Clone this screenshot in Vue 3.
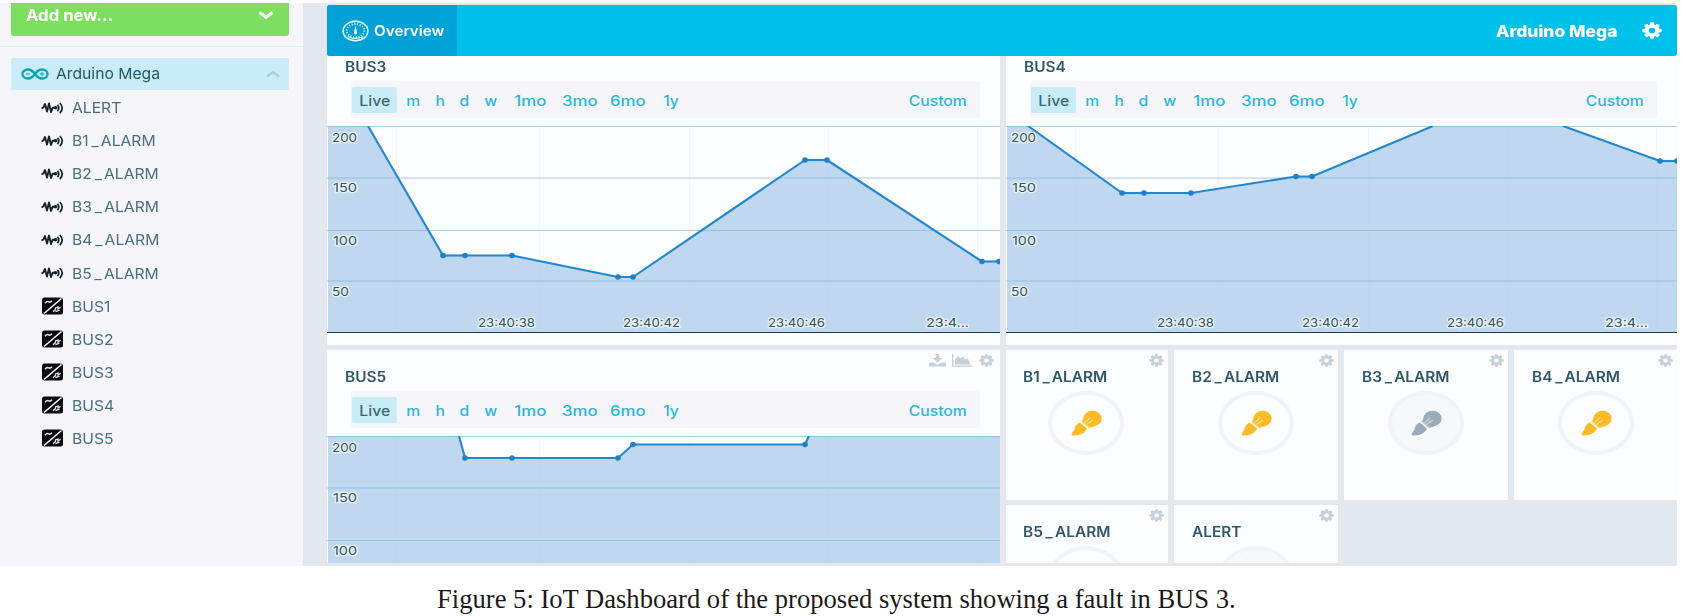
<script setup>
const ranges = ['Live', 'm', 'h', 'd', 'w', '1mo', '3mo', '6mo', '1y']

const devices = [
  { name: 'ALERT', kind: 'signal' },
  { name: 'B1_ALARM', kind: 'signal' },
  { name: 'B2_ALARM', kind: 'signal' },
  { name: 'B3_ALARM', kind: 'signal' },
  { name: 'B4_ALARM', kind: 'signal' },
  { name: 'B5_ALARM', kind: 'signal' },
  { name: 'BUS1', kind: 'analog' },
  { name: 'BUS2', kind: 'analog' },
  { name: 'BUS3', kind: 'analog' },
  { name: 'BUS4', kind: 'analog' },
  { name: 'BUS5', kind: 'analog' },
]

const grid = [0.5, 52, 104.5, 155]
const verticals = [69, 212, 362, 501, 650]
const values = [
  { text: '200', x: 5, y: 15.5, w: 25 },
  { text: '150', x: 6, y: 66, w: 24 },
  { text: '100', x: 6, y: 118.5, w: 24 },
  { text: '50', x: 5, y: 170, w: 17 },
]
const times = [
  { text: '23:40:38', x: 151, w: 57 },
  { text: '23:40:42', x: 296, w: 57 },
  { text: '23:40:46', x: 441, w: 57 },
  { text: '23:4...', x: 599, w: 43 },
]

const charts = [
  {
    name: 'BUS3', height: 206, tucked: true,
    points: [[41, 0], [116, 129.5], [138, 129.5], [185, 129.5], [291, 151], [306, 151], [478, 34], [500, 34], [655, 135.5], [672, 135.5]],
  },
  {
    name: 'BUS4', height: 206, tucked: true,
    points: [[22, 0], [116, 67], [138, 67], [185, 67], [290, 50.5], [306, 50.5], [427, 0], [557, 0], [654, 35], [671, 35]],
  },
  {
    name: 'BUS5', height: 127, tucked: false,
    points: [[132, 0], [138, 22], [185, 22], [291, 22], [306, 8.5], [478, 8.5], [482, 0], [673, 0]],
  },
]

const pairs = (pts) => pts.map((p) => p.join(',')).join(' ')
const area = (c) => `1,0 ${pairs(c.points)} 673,${c.points.at(-1)[1]} 673,206 1,206`
const segments = (c) => {
  const out = []
  for (let i = 1; i < c.points.length; i++) {
    const a = c.points[i - 1]
    const b = c.points[i]
    if (a[1] === 0 && b[1] === 0) continue
    out.push(pairs([a, b]))
  }
  return out
}
const dots = (c) => c.points.filter((p) => p[1] > 0)

// Names are split so that the underscore can carry its own spacing.
const parts = (name) => name.split(/(_)/)

const alarms = [
  { name: 'B1_ALARM', on: true },
  { name: 'B2_ALARM', on: true },
  { name: 'B3_ALARM', on: false },
  { name: 'B4_ALARM', on: true },
  { name: 'B5_ALARM', on: true },
  { name: 'ALERT', on: false },
]
</script>

<template>
  <svg class="defs" width="0" height="0">
    <symbol id="gear" viewBox="0 0 20 20">
      <g fill="currentColor">
        <rect v-for="a in [0, 45, 90, 135]" :key="a" x="7.9" y="0.4" width="4.2" height="19.2" rx="1" :transform="`rotate(${a} 10 10)`" mask="url(#hole)" />
      </g>
      <circle cx="10" cy="10" r="5.3" fill="none" stroke="currentColor" stroke-width="4" />
    </symbol>
    <mask id="hole" maskUnits="userSpaceOnUse" x="0" y="0" width="20" height="20">
      <rect width="20" height="20" fill="#fff" />
      <circle cx="10" cy="10" r="4" fill="#000" />
    </mask>
    <symbol id="bulb" viewBox="0 0 30 25">
      <ellipse cx="20.8" cy="8.2" rx="8.8" ry="7.6" fill="currentColor" />
      <path d="M13 7L10 11.5L17 17.5L24 15Z" fill="currentColor" />
      <path d="M8.5 12Q4 14 3.2 19L.6 22.8Q.4 24.8 2.3 24.6L7.5 24Q13 22.5 15.6 18Z" fill="currentColor" />
      <path d="M10.2 10.9L17.6 17.1M13.4 12.2L18.4 7.2M15.2 13.8L21 9.8" stroke="#fff" stroke-width="1" opacity=".6" />
    </symbol>
  </svg>

  <div class="page">
    <div class="dashboard">
      <aside class="sidebar">
        <div class="add">
          <span class="wide">Add new...</span>
          <svg width="16" height="9" viewBox="0 0 16 9"><path d="M1.5 1.5L8 6.3L14.5 1.5" fill="none" stroke="#fff" stroke-width="3.2" /></svg>
        </div>
        <div class="tree">
          <div class="project">
            <svg width="28" height="12" viewBox="0 0 28 12" fill="none" stroke="#0ea3ad" stroke-width="2.3">
              <path d="M14 6C11.5 2.6 9.5 1.5 7 1.5C3.8 1.5 1.4 3.4 1.4 6S3.8 10.5 7 10.5C9.5 10.5 11.5 9.4 14 6C16.5 2.6 18.5 1.5 21 1.5C24.2 1.5 26.6 3.4 26.6 6S24.2 10.5 21 10.5C18.5 10.5 16.5 9.4 14 6Z" />
              <path d="M5 6H9M19 6H23M21 4.3V7.7" stroke-width="1.2" />
            </svg>
            <span class="project-name wide">Arduino Mega</span>
            <svg width="14" height="8" viewBox="0 0 14 8"><path d="M1 6.5L7 2L13 6.5" fill="none" stroke="#a9cbd6" stroke-width="2" /></svg>
          </div>
          <div class="devices">
            <div v-for="d in devices" :key="d.name" class="device">
              <svg v-if="d.kind === 'signal'" width="24" height="14" viewBox="0 0 24 14" fill="none" stroke="#14242c">
                <path d="M.5 7.5L2.4 6.5L4 3L6 10.5L8 2.5L10 11L11.6 6.8H14" stroke-width="1.9" stroke-linejoin="round" />
                <circle cx="14.6" cy="6.8" r="1.8" fill="#14242c" stroke="none" />
                <path d="M16.4 3.9Q19.2 7 16.4 10.1M18.8 2Q23.6 7 18.8 12.2" stroke-width="1.7" />
              </svg>
              <svg v-else width="24" height="18" viewBox="0 0 24 18">
                <rect x="1" y=".5" width="21" height="17" rx="2.5" fill="#070b0e" />
                <path d="M3 16.5L20.5 1.5" stroke="#fff" stroke-width="1.5" />
                <path d="M4 6.2Q6 3.8 7.6 4.8T11 3.8" fill="none" stroke="#f3dcda" stroke-width="1.5" />
                <path d="M12 14.8L14.5 12.6V11L17 10V12L19.6 10.2M14.5 14.6L18.5 13.2" fill="none" stroke="#f3dcda" stroke-width="1.3" />
              </svg>
              <span class="device-name"><span v-for="(p, i) in parts(d.name)" :key="i" :class="{ dash: p === '_' }">{{ p }}</span></span>
            </div>
          </div>
        </div>
      </aside>

      <main class="main">
        <header class="topbar">
          <div class="tab">
            <svg width="27" height="22" viewBox="0 0 27 22" fill="none" stroke="#e9fbff">
              <ellipse cx="13.5" cy="11" rx="12.4" ry="9.8" stroke-width="1.5" />
              <ellipse cx="13.5" cy="10.6" rx="8.8" ry="6.6" stroke-width="1.9" stroke-dasharray="1.1 1.6" />
              <path d="M6 16.8Q13.5 20 21 16.8" stroke-width="1.2" />
              <path d="M13.5 5.2L15.2 13.4Q13.5 15.6 11.8 13.4Z" fill="#fff" stroke="none" />
            </svg>
            <span class="tab-name">Overview</span>
          </div>
          <div class="owner">
            <span class="owner-name">Arduino Mega</span>
            <svg class="owner-gear" preserveAspectRatio="none" viewBox="0 0 20 20"><use href="#gear" /></svg>
          </div>
        </header>

        <div class="board">
          <section v-for="c in charts" :key="c.name" class="card" :class="{ tucked: c.tucked }">
            <h2>{{ c.name }}</h2>
            <div v-if="!c.tucked" class="tools">
              <svg width="17" height="13" viewBox="0 0 17 13" fill="currentColor"><path d="M6.8 0H10.2V4H13.5L8.5 8.6L3.5 4H6.8ZM0 8.8H4.8L8.5 11L12.2 8.8H17V12.6H0Z" /></svg>
              <svg width="21" height="13" viewBox="0 0 21 13" fill="currentColor"><path d="M0 0H1.4V11.4H20.5V12.8H0ZM3 10.4V5.4L6 2L8.6 4.4L11 2.4L13.4 5.8L15.6 4L18.6 10.4Z" /></svg>
              <svg width="15" height="13" viewBox="0 0 20 20" preserveAspectRatio="none"><use href="#gear" /></svg>
            </div>
            <div class="ranges">
              <div v-for="r in ranges" :key="r" class="range" :class="{ live: r === 'Live', long: r.endsWith('mo') }"><span>{{ r }}</span></div>
              <div class="range custom"><span>Custom</span></div>
            </div>
            <svg class="plot" width="673" :height="c.height" :viewBox="`0 0 673 ${c.height}`">
              <polygon :points="area(c)" fill="#bfd8ef" />
              <path v-for="v in verticals" :key="v" :d="`M${v}.5 0V206`" stroke="#b3cbe4" stroke-opacity=".12" />
              <path v-for="g in grid" :key="g" :d="`M0 ${g}H673`" stroke="#79b3d6" stroke-opacity=".6" />
              <polyline v-for="s in segments(c)" :key="s" :points="s" fill="none" stroke="#2187cf" stroke-width="2.1" />
              <circle v-for="(p, i) in dots(c)" :key="i" :cx="p[0]" :cy="p[1]" r="2.8" fill="#1f7fc8" />
              <g class="labels">
                <text v-for="v in c.tucked ? values : values.slice(0, 3)" :key="v.text" :x="v.x" :y="v.y" :textLength="v.w" lengthAdjust="spacingAndGlyphs">{{ v.text }}</text>
                <template v-if="c.tucked">
                  <text v-for="t in times" :key="t.text" :x="t.x" y="201" :textLength="t.w" lengthAdjust="spacingAndGlyphs">{{ t.text }}</text>
                </template>
              </g>
            </svg>
          </section>

          <div class="alarms">
            <section v-for="a in alarms" :key="a.name" class="alarm">
              <svg class="alarm-gear" width="15" height="13" viewBox="0 0 20 20" preserveAspectRatio="none"><use href="#gear" /></svg>
              <h2><span v-for="(p, i) in parts(a.name)" :key="i" :class="{ dash: p === '_' }">{{ p }}</span></h2>
              <div class="lamp" :class="{ off: !a.on }">
                <svg width="31" height="26"><use href="#bulb" /></svg>
              </div>
            </section>
          </div>
        </div>
      </main>
    </div>
    <p class="caption">Figure 5: IoT Dashboard of the proposed system showing a fault in BUS 3.</p>
  </div>
</template>

<style>
body {
  margin: 0;
  background: #fff;
}
</style>

<style scoped>
.defs {
  position: absolute;
}
.page {
  width: 1686px;
  height: 616px;
  padding-top: 3px;
  box-sizing: border-box;
  overflow: hidden;
  background: #fff;
  font-family: Inter, "Open Sans", sans-serif;
}
svg {
  display: block;
  flex: none;
}
.dashboard {
  display: flex;
  width: 1677px;
  height: 563px;
  background: #e3e8ee;
  overflow: hidden;
}
.sidebar {
  width: 303px;
  flex: none;
  background: #f5f5fa;
}
.wide {
  transform: scaleX(1.06);
  transform-origin: left;
}
.add {
  display: flex;
  align-items: center;
  justify-content: space-between;
  height: 33px;
  margin: 0 14px 0 11px;
  padding: 0 15px 8px;
  box-sizing: border-box;
  border-radius: 0 0 3px 3px;
  background: #7ddf60;
  color: #fff;
  font-size: 15.8px;
  font-weight: 700;
}
.tree {
  margin-top: 10px;
  padding: 11px 14px 0 11px;
  border-top: 1px solid #e1eaee;
}
.project {
  display: flex;
  align-items: center;
  height: 32px;
  padding: 0 9px 0 10px;
  border-radius: 2px;
  background: #c9edf6;
  color: #23586a;
  font-size: 14.8px;
}
.project-name {
  flex: 1;
  margin-left: 7px;
}
.devices {
  padding-top: 1px;
}
.device {
  display: flex;
  align-items: center;
  gap: 7px;
  height: 33.1px;
  padding-left: 30px;
  color: #49707f;
  font-size: 14px;
}
.device-name {
  transform: scaleX(1.12);
  transform-origin: left;
}
.dash {
  margin: 0 2px 0 2.5px;
}
.main {
  flex: 1;
  padding: 2px 0 0 24px;
}
.topbar {
  display: flex;
  justify-content: space-between;
  height: 51px;
  border-radius: 3px;
  overflow: hidden;
  background: #00c1e9;
  color: #fff;
}
.tab {
  display: flex;
  align-items: center;
  gap: 5px;
  width: 130px;
  padding-left: 15px;
  box-sizing: border-box;
  background: #00a1d7;
  font-size: 14px;
  font-weight: 600;
}
.tab-name {
  transform: scaleX(1.09);
  transform-origin: left;
}
.owner {
  display: flex;
  align-items: center;
  gap: 25px;
  padding-right: 15px;
  font-size: 16px;
  font-weight: 800;
}
.owner-name {
  transform: scaleX(1.09);
  transform-origin: right;
}
.owner-gear {
  width: 20px;
  height: 17px;
}
.board {
  display: grid;
  grid-template-columns: 673px 671px;
  grid-template-rows: 289px 213px;
  gap: 5px 6px;
}
.card {
  position: relative;
  padding-top: 18px;
  overflow: hidden;
  background: #fcfdfe;
}
.card.tucked {
  padding-top: 2px;
}
h2 {
  margin: 0 0 0 18px;
  color: #2f5968;
  font-size: 14px;
  line-height: 17px;
  font-weight: 600;
  transform: scaleX(1.1);
  transform-origin: left;
}
.tools {
  position: absolute;
  top: 4px;
  right: 6px;
  display: flex;
  gap: 6px;
  color: #c5d0da;
}
.ranges {
  display: grid;
  grid-template-columns: 45px 32px 22px 26px 28px 50px 49px 47px 39px 1fr;
  align-items: center;
  height: 37px;
  margin: 6px 20px 8px 24px;
  padding: 0 13px 0 1px;
  border-radius: 3px;
  background: #f5f5fa;
}
.range {
  color: #27b8dc;
  font-size: 14px;
  line-height: 26px;
  font-weight: 500;
  text-align: center;
}
.range span {
  display: inline-block;
  transform: translateY(0.5px) scaleX(1.12);
}
.range.long span {
  transform: translateY(0.5px) scaleX(1.2);
}
.range.live {
  border-radius: 2px;
  background: #c9edf6;
  color: #3c6878;
}
.range.custom {
  text-align: right;
}
.range.custom span {
  transform-origin: right;
}
.tucked .plot {
  border-bottom: 1px solid #1b3f52;
}
.labels text {
  fill: #2c5562;
  stroke: #eef2f2;
  stroke-width: 2.5px;
  paint-order: stroke;
  stroke-linejoin: round;
  font-size: 12px;
}
.alarms {
  display: grid;
  grid-template-columns: 162px 164px 164px 163px;
  grid-template-rows: 150px 58px;
  gap: 5px 6px;
}
.alarm {
  position: relative;
  padding-top: 18px;
  overflow: hidden;
  background: #fcfdfe;
}
.alarm h2 {
  margin-left: 18px;
}
.alarm-gear {
  position: absolute;
  top: 4px;
  right: 4px;
  color: #c5d0da;
}
.lamp {
  display: flex;
  align-items: center;
  justify-content: center;
  width: 76px;
  height: 64px;
  margin: 6px 0 0 44px;
  box-sizing: border-box;
  border: 4px solid #eff4f7;
  border-radius: 50%;
  color: #ffba24;
}
.alarm:nth-child(4n + 1) h2 {
  margin-left: 17px;
}
.alarm:nth-child(4n + 1) .lamp {
  margin-left: 42px;
}
.lamp.off {
  background: #f5f9fa;
  color: #9aabba;
}
.caption {
  margin: 0;
  padding: 17px 0 0 437px;
  color: #1c191a;
  font: 26.6px/32px "Liberation Serif", serif;
  white-space: nowrap;
}
</style>
